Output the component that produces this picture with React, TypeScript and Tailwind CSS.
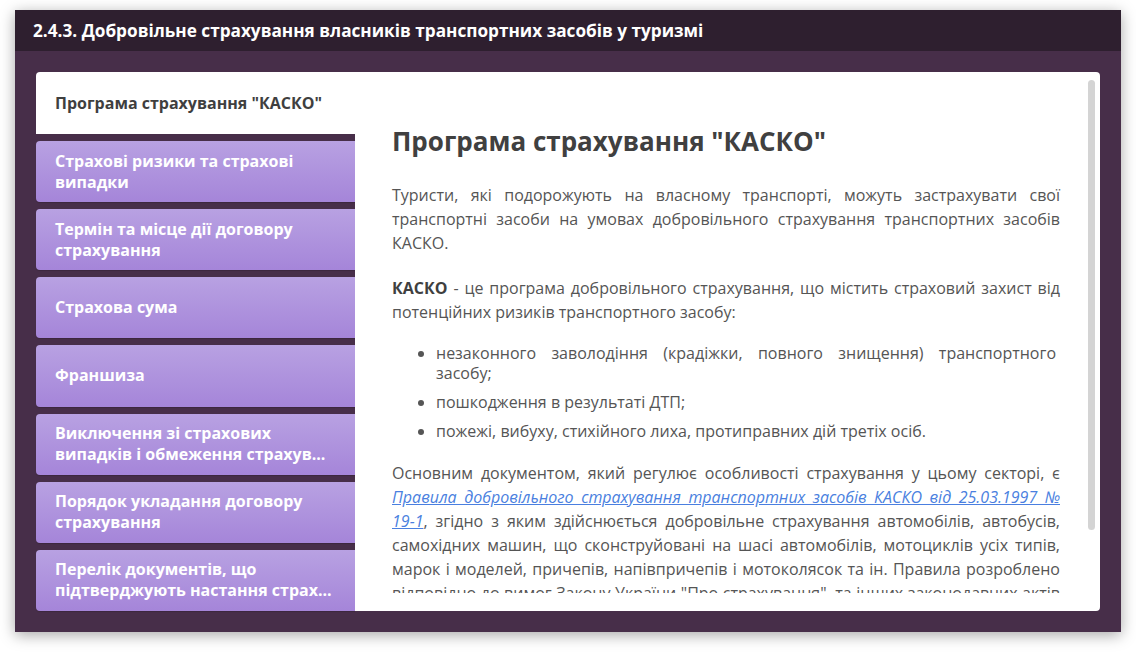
const tabs = [
  'Страхові ризики та страхові випадки',
  'Термін та місце дії договору страхування',
  'Страхова сума',
  'Франшиза',
  'Виключення зі страхових випадків і обмеження страхув...',
  'Порядок укладання договору страхування',
  'Перелік документів, що підтверджують настання страх...',
]

export default function App() {
  return (
    <div className="w-[1136px] h-[653px] bg-white pl-[15px] pt-[10px] font-['Open_Sans',sans-serif]">
      <div className="w-[1106px] h-[622px] flex flex-col shadow-[0_3px_14px_rgba(0,0,0,0.35)]">
        {/* header */}
        <div className="h-[41px] shrink-0 bg-[#2e1f2f] flex items-center pl-[18px]">
          <h1 className="text-white font-bold text-[17.2px] leading-[22px]">
            2.4.3. Добровільне страхування власників транспортних засобів у туризмі
          </h1>
        </div>

        <div className="flex-1 min-h-0 bg-[#472e49] p-[21px] flex">
          {/* tabs */}
          <div className="w-[319px] flex flex-col gap-[7px]">
            <div className="h-[62px] shrink-0 bg-white rounded-tl-[4px] flex items-center pl-[19px] pr-2">
              <span className="text-[#3f3f3f] font-bold text-[16px] leading-[21px]">
                Програма страхування "КАСКО"
              </span>
            </div>
            {tabs.map((t) => (
              <div
                key={t}
                className="flex-1 rounded-l-[4px] bg-gradient-to-b from-[#b8a1e2] to-[#a585d9] flex items-center pl-[19px] pr-2 shadow-[0_1px_1px_rgba(0,0,0,0.15)]"
              >
                <span className="text-white font-bold text-[16px] leading-[21px]">{t}</span>
              </div>
            ))}
          </div>

          {/* content */}
          <div className="relative flex-1 bg-white rounded-r-[4px] pb-[18px] flex flex-col">
            <div className="flex-1 overflow-hidden pl-[37px] pr-[40px] pt-[53px] text-[16px] text-[#555] leading-[24px]">
              <h2 className="text-[26px] leading-[32px] font-bold text-[#404040] mb-[26px]">
                Програма страхування "КАСКО"
              </h2>
              <p className="text-justify mb-[21px]">
                Туристи, які подорожують на власному транспорті, можуть застрахувати свої транспортні засоби на умовах
                добровільного страхування транспортних засобів КАСКО.
              </p>
              <p className="text-justify mb-[19px]">
                <b className="text-[#3f3f3f]">КАСКО</b> - це програма добровільного страхування, що містить страховий
                захист від потенційних ризиків транспортного засобу:
              </p>
              <ul className="list-disc pl-[44px] pr-[4px] mb-[20px] space-y-[9px] leading-[20px] text-justify">
                <li>незаконного заволодіння (крадіжки, повного знищення) транспортного засобу;</li>
                <li>пошкодження в результаті ДТП;</li>
                <li>пожежі, вибуху, стихійного лиха, протиправних дій третіх осіб.</li>
              </ul>
              <p className="text-justify">
                Основним документом, який регулює особливості страхування у цьому секторі, є{' '}
                <a href="#" className="italic underline text-[#4a7fe0]">
                  Правила добровільного страхування транспортних засобів КАСКО від 25.03.1997 №{' '}
                  <span className="whitespace-nowrap">19-1</span>
                </a>
                , згідно з яким здійснюється добровільне страхування автомобілів, автобусів, самохідних машин, що
                сконструйовані на шасі автомобілів, мотоциклів усіх типів, марок і моделей, причепів, напівпричепів і
                мотоколясок та ін. Правила розроблено відповідно до вимог Закону України "Про страхування", та інших
                законодавчих актів України.
              </p>
            </div>
            {/* scrollbar thumb */}
            <div className="absolute right-[5px] top-[8px] w-[7px] h-[450px] rounded-full bg-[#d4d4d4]" />
          </div>
        </div>
      </div>
    </div>
  )
}
